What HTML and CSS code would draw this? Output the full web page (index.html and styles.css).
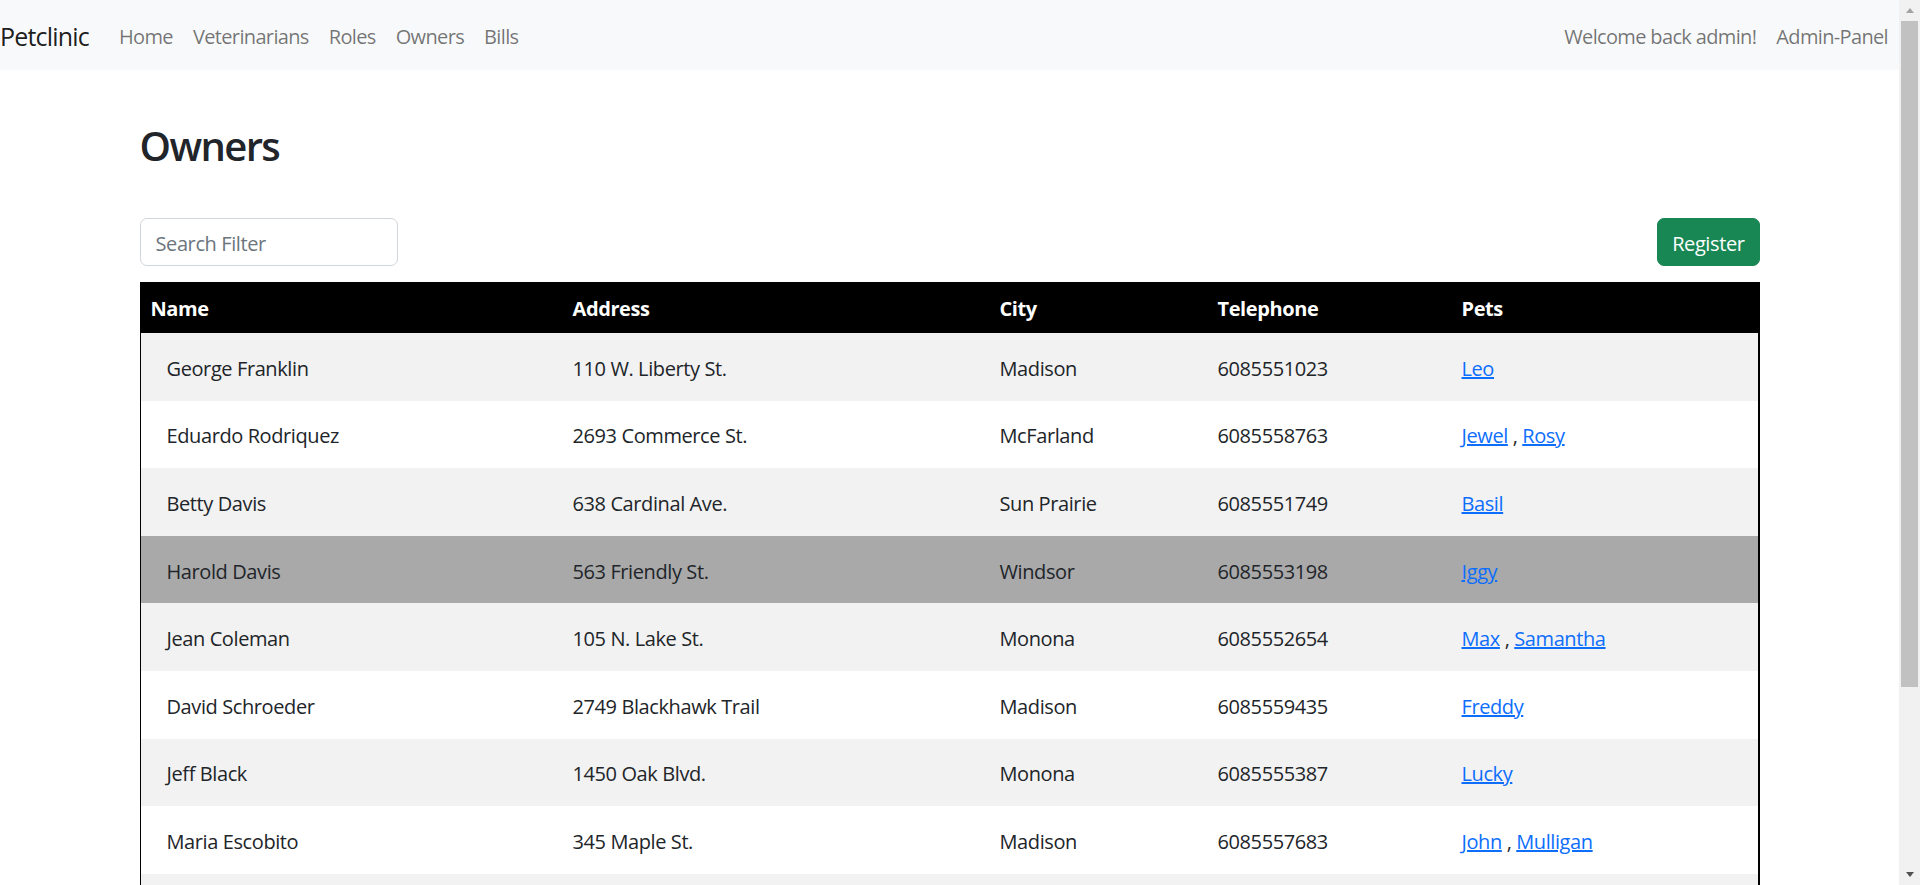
FILE: index.html
```html
<!DOCTYPE html>
<html lang="en">
<head>
<meta charset="utf-8">
<title>Petclinic - Owners</title>
<link rel="stylesheet" href="styles.css">
</head>
<body>
<div class="viewport">
  <div class="page">
    <nav class="navbar">
      <div class="nav-left">
        <a class="brand" href="#">Petclinic</a>
        <a class="nav-link" href="#">Home</a>
        <a class="nav-link" href="#">Veterinarians</a>
        <a class="nav-link" href="#">Roles</a>
        <a class="nav-link" href="#">Owners</a>
        <a class="nav-link" href="#">Bills</a>
      </div>
      <div class="nav-right">
        <span class="nav-link">Welcome back admin!</span>
        <a class="nav-link" href="#">Admin-Panel</a>
      </div>
    </nav>

    <main class="container">
      <h2 class="title">Owners</h2>
      <div class="toolbar">
        <input class="search" type="text" placeholder="Search Filter">
        <button class="btn-register" type="button">Register</button>
      </div>
      <table class="owners">
        <colgroup>
          <col class="c-name">
          <col class="c-address">
          <col class="c-city">
          <col class="c-phone">
          <col class="c-pets">
        </colgroup>
        <thead>
          <tr>
            <th>Name</th>
            <th>Address</th>
            <th>City</th>
            <th>Telephone</th>
            <th>Pets</th>
          </tr>
        </thead>
        <tbody>
          <tr><td>George Franklin</td><td>110 W. Liberty St.</td><td>Madison</td><td>6085551023</td><td><a href="#">Leo</a></td></tr>
          <tr><td>Eduardo Rodriquez</td><td>2693 Commerce St.</td><td>McFarland</td><td>6085558763</td><td><a href="#">Jewel</a> , <a href="#">Rosy</a></td></tr>
          <tr><td>Betty Davis</td><td>638 Cardinal Ave.</td><td>Sun Prairie</td><td>6085551749</td><td><a href="#">Basil</a></td></tr>
          <tr class="hovered"><td>Harold Davis</td><td>563 Friendly St.</td><td>Windsor</td><td>6085553198</td><td><a href="#">Iggy</a></td></tr>
          <tr><td>Jean Coleman</td><td>105 N. Lake St.</td><td>Monona</td><td>6085552654</td><td><a href="#">Max</a> , <a href="#">Samantha</a></td></tr>
          <tr><td>David Schroeder</td><td>2749 Blackhawk Trail</td><td>Madison</td><td>6085559435</td><td><a href="#">Freddy</a></td></tr>
          <tr><td>Jeff Black</td><td>1450 Oak Blvd.</td><td>Monona</td><td>6085555387</td><td><a href="#">Lucky</a></td></tr>
          <tr><td>Maria Escobito</td><td>345 Maple St.</td><td>Madison</td><td>6085557683</td><td><a href="#">John</a> , <a href="#">Mulligan</a></td></tr>
          <tr><td>Peter McTavish</td><td>2387 S. Fair Way</td><td>Madison</td><td>6085552765</td><td><a href="#">George</a></td></tr>
        </tbody>
      </table>
    </main>
  </div>
  <div class="scrollbar" aria-hidden="true">
    <div class="sb-btn"><span class="arrow-up"></span></div>
    <div class="sb-thumb"></div>
    <div class="sb-space"></div>
    <div class="sb-btn"><span class="arrow-down"></span></div>
  </div>
</div>
</body>
</html>
```

FILE: styles.css
```css
* {
  box-sizing: border-box;
}

html, body {
  margin: 0;
  padding: 0;
}

body {
  font-family: "Open Sans", "Liberation Sans", sans-serif;
  font-size: 20px;
  line-height: 30px;
  color: #212529;
  background: #fff;
  letter-spacing: -0.4px;
}

.viewport {
  display: flex;
  width: 1920px;
  height: 885px;
  overflow: hidden;
}

.page {
  flex: 1;
  min-width: 0;
  overflow: hidden;
}

/* Navbar */
.navbar {
  height: 70px;
  background: #f8f9fa;
  display: flex;
  align-items: center;
  justify-content: space-between;
  padding: 0 1px 0 0;
}

.nav-left, .nav-right {
  display: flex;
  align-items: center;
}

.brand {
  font-size: 25px;
  line-height: 37.5px;
  padding: 8px 0 5px;
  margin-right: 20px;
  color: rgba(0, 0, 0, 0.9);
  text-decoration: none;
  letter-spacing: -0.8px;
}

.nav-link {
  padding: 11.5px 10px 8.5px;
  color: rgba(0, 0, 0, 0.55);
  text-decoration: none;
  letter-spacing: -0.65px;
}

/* Content */
.container {
  max-width: 1650px;
  margin: 0 auto;
  padding: 0 15px;
}

.title {
  font-size: 40px;
  line-height: 48px;
  font-weight: 600;
  margin: 52px 0 48px;
  letter-spacing: -1.6px;
}

.toolbar {
  display: flex;
  justify-content: space-between;
  align-items: center;
  margin-bottom: 16px;
}

.search {
  width: 258px;
  height: 48px;
  padding: 2px 15px 0;
  font-family: inherit;
  font-size: 20px;
  letter-spacing: -0.4px;
  color: #212529;
  border: 1px solid #d0d5da;
  border-radius: 7px;
  background: #fff;
}

.search::placeholder {
  color: #6c757d;
}

.btn-register {
  height: 48px;
  padding: 2px 14px 0;
  font-family: inherit;
  font-size: 20px;
  letter-spacing: -0.4px;
  color: #fff;
  background: #198754;
  border: 1px solid #198754;
  border-radius: 7px;
}

/* Table */
.owners {
  width: 100%;
  table-layout: fixed;
  border-collapse: separate;
  border-spacing: 0;
}

.c-name { width: 423px; }
.c-address { width: 427px; }
.c-city { width: 218px; }
.c-phone { width: 244px; }
.c-pets { width: 308px; }

.owners th {
  background: #000;
  color: #fff;
  font-weight: 700;
  text-align: left;
  padding: 12px 10px 9px;
}

.owners th:first-child {
  padding-left: 11px;
}

.owners td {
  padding: 20.8px 10px 16.8px;
  text-align: left;
  color: #212529;
}

.owners tbody tr:nth-child(odd) td {
  background: #f2f2f2;
}

.owners tbody tr.hovered td {
  background: #a9a9a9;
}

.owners td:first-child {
  border-left: 1px solid #000;
  padding-left: 26px;
}

.owners td:last-child {
  border-right: 2px solid #000;
}

.owners a {
  color: #0d6efd;
  text-decoration: underline;
}

/* Fake window scrollbar */
.scrollbar {
  width: 21px;
  flex: none;
  background: #f1f1f1;
  display: flex;
  flex-direction: column;
}

.sb-btn {
  height: 21px;
  display: flex;
  align-items: center;
  justify-content: center;
  flex: none;
}

.arrow-up {
  width: 0;
  height: 0;
  border-left: 4.5px solid transparent;
  border-right: 4.5px solid transparent;
  border-bottom: 5px solid #a3a3a3;
}

.arrow-down {
  width: 0;
  height: 0;
  border-left: 4.5px solid transparent;
  border-right: 4.5px solid transparent;
  border-top: 5px solid #505050;
}

.sb-thumb {
  height: 666px;
  margin: 0 2px;
  background: #c1c1c1;
  flex: none;
}

.sb-space {
  flex: 1;
}
```
